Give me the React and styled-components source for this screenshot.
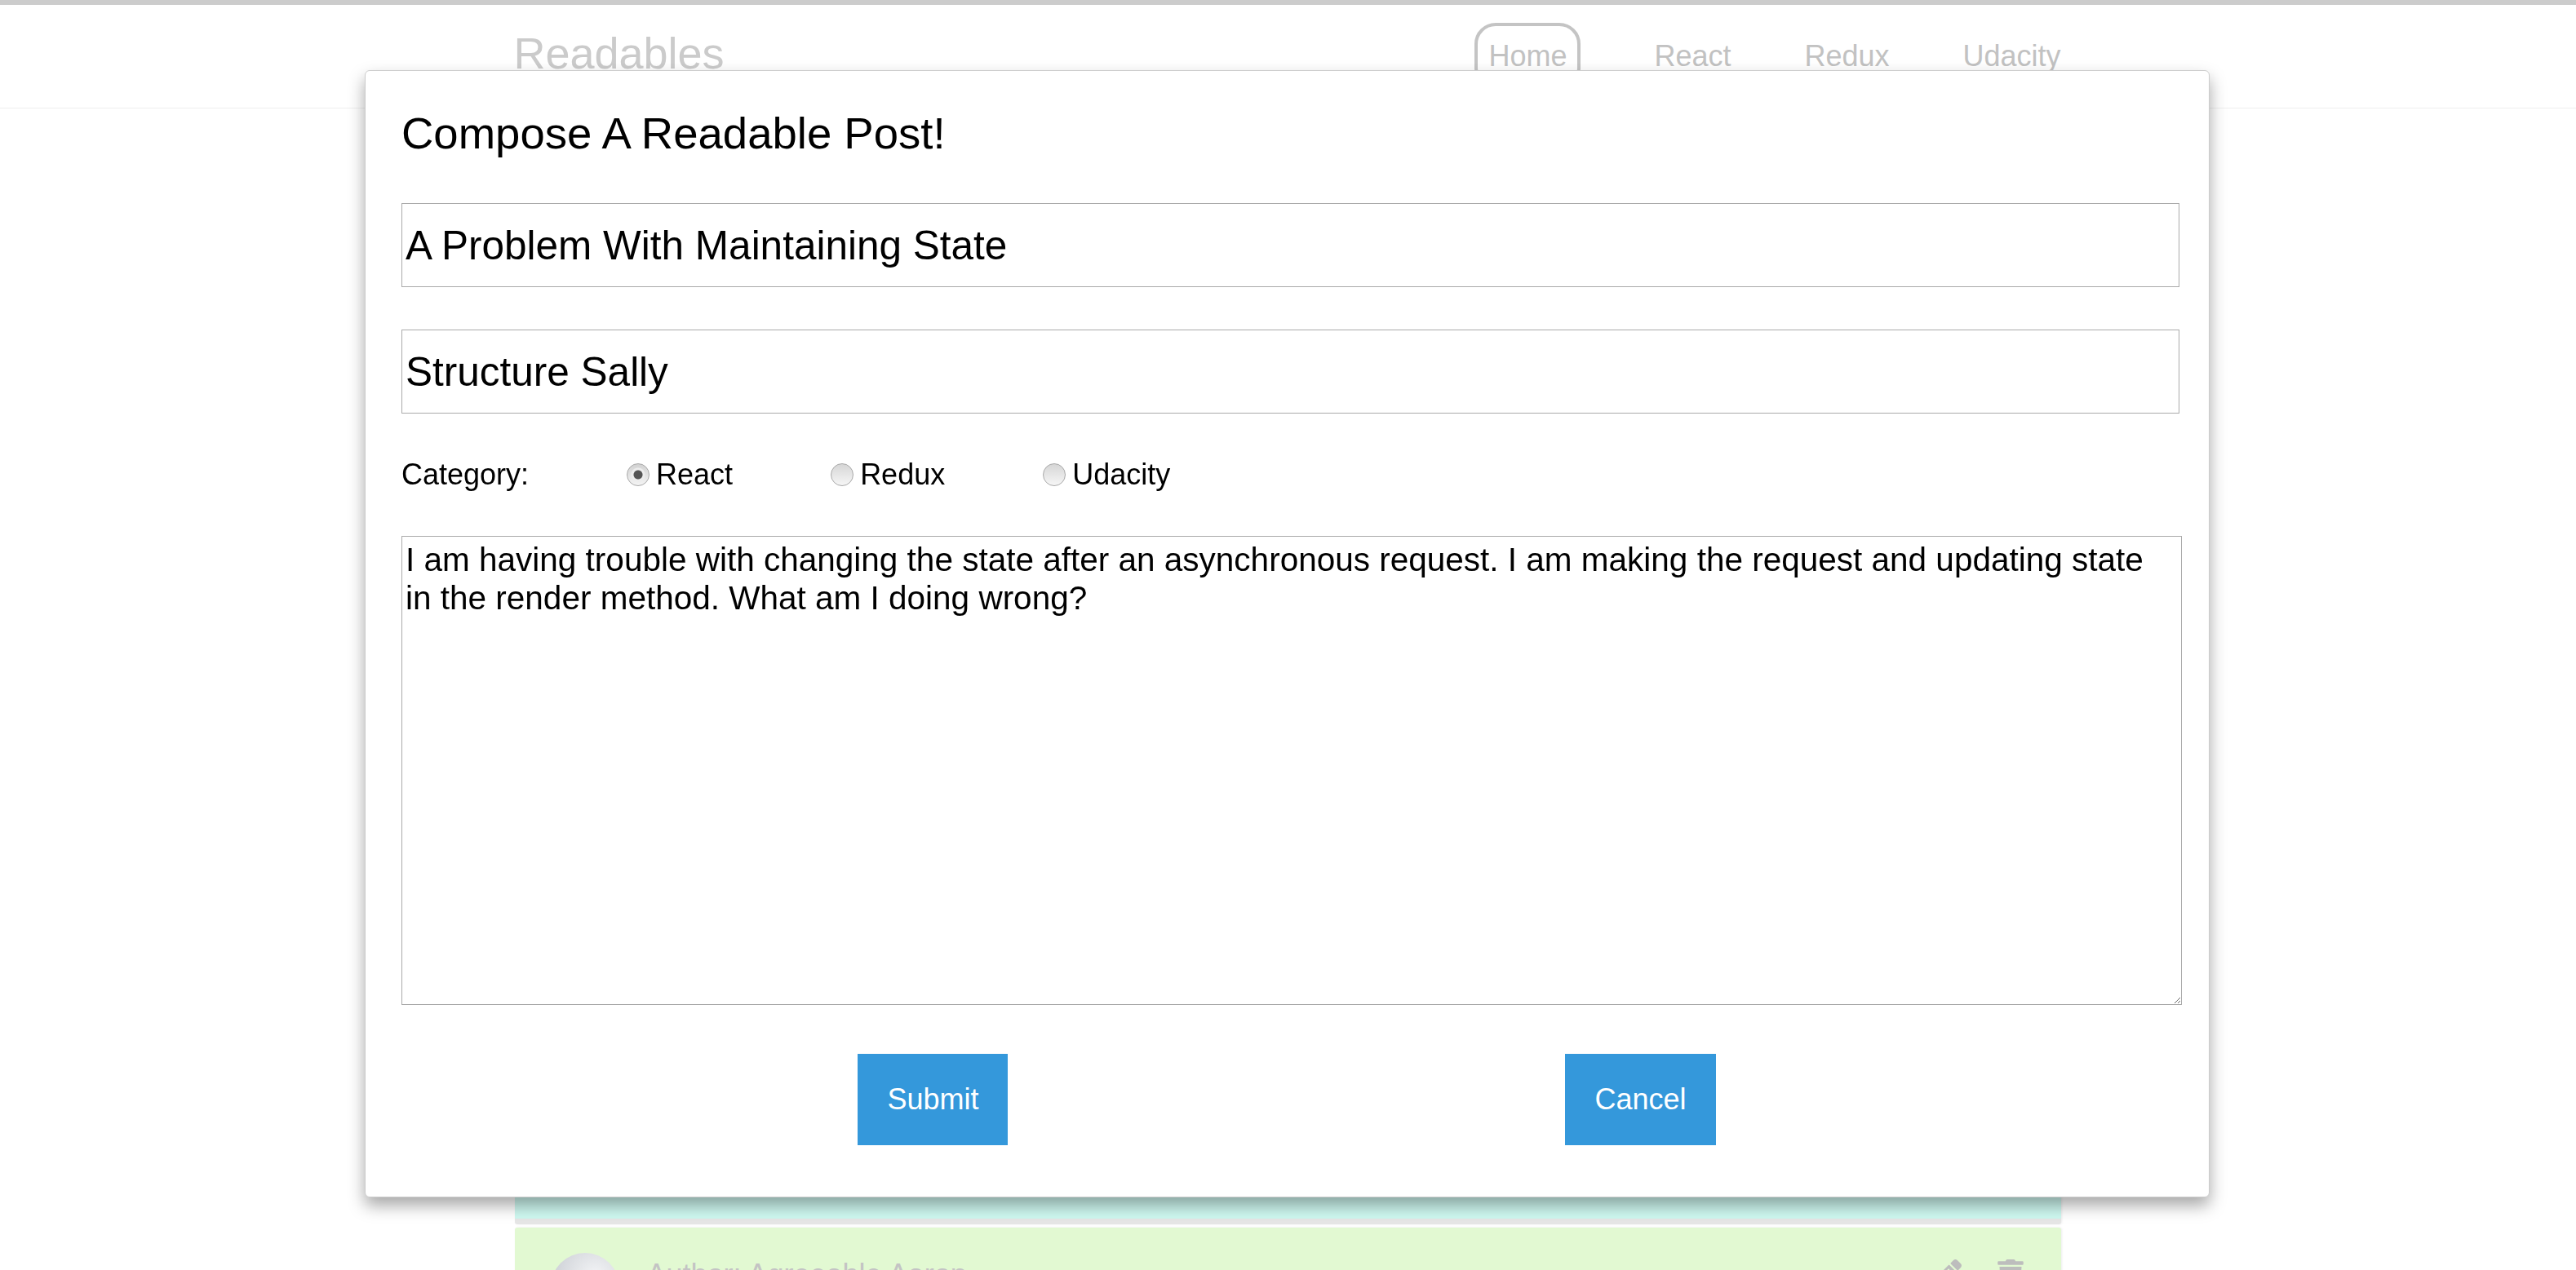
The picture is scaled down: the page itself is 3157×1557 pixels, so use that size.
import React, { useState } from "react";
import styled, { createGlobalStyle, css } from "styled-components";
import { FaPencilAlt, FaTrash } from "react-icons/fa";

const GlobalStyle = createGlobalStyle`
  html, body {
    margin: 0;
    padding: 0;
    overflow: hidden;
    background: #ffffff;
    font-family: "Liberation Sans", Arial, sans-serif;
  }
  * {
    box-sizing: border-box;
  }
`;

const TopStripe = styled.div`
  height: 6px;
  background: #cccccc;
`;

const HeaderBar = styled.header`
  height: 127px;
  border-bottom: 1px solid #efefef;
  background: #ffffff;
`;

const Container = styled.div`
  width: 60%;
  margin: 0 auto;
`;

const HeaderInner = styled(Container)`
  height: 100%;
  display: flex;
  justify-content: space-between;
  align-items: center;
`;

const Brand = styled.div`
  font-size: 54px;
  color: #cbcbcb;
  padding-bottom: 8px;
  margin-left: -2px;
`;

const Nav = styled.nav`
  display: flex;
  align-items: center;
  gap: 90px;
`;

const NavLink = styled.a`
  font-size: 36px;
  color: #c2c2c2;
  text-decoration: none;

  ${(p) =>
    p.$active &&
    css`
      border: 4px solid #c4c4c4;
      border-radius: 26px;
      padding: 16px 13px;
    `}
`;

const PostList = styled(Container)`
  padding-top: 40px;
  display: flex;
  flex-direction: column;
  gap: 4px;
`;

const PostCard = styled.div`
  height: 440px;
  background: ${(p) => p.$tint};
  border-bottom: 7px solid #e6e6e6;
  border-radius: 3px;
  box-shadow: 1px 0 3px rgba(0, 0, 0, 0.08);
  padding: 31px 44px;
`;

const CardRow = styled.div`
  display: flex;
  align-items: flex-start;
  gap: 33px;
`;

const Avatar = styled.div`
  width: 84px;
  height: 84px;
  border-radius: 50%;
  background: radial-gradient(circle at 65% 35%, #f4f5f7 0%, #d3d6db 60%, #bfc3c9 100%);
`;

const Author = styled.div`
  flex: 1;
  padding-top: 6px;
  font-size: 36px;
  color: #c4c4c4;
`;

const Actions = styled.div`
  display: flex;
  gap: 42px;
  padding-top: 8px;
  color: #bdbdbd;
  font-size: 36px;
`;

const Overlay = styled.div`
  position: fixed;
  inset: 0;
  background: transparent;
`;

const Modal = styled.div`
  position: absolute;
  top: 86px;
  left: 447px;
  width: 2261px;
  background: #ffffff;
  border: 1px solid #cccccc;
  border-radius: 6px;
  box-shadow: 0 10px 20px rgba(0, 0, 0, 0.35);
  padding: 45px 36px 63px 44px;
  color: #000000;
`;

const Form = styled.form`
  display: flex;
  flex-direction: column;
  gap: 54px;
`;

const Title = styled.h2`
  margin: 0;
  font-size: 54.5px;
  font-weight: 400;
`;

const TextField = styled.input`
  width: 100%;
  font-family: inherit;
  font-size: 49.5px;
  color: #000000;
  padding: 22px 4px;
  border: 1px solid #aaaaaa;
  border-radius: 0;
  outline: none;
  margin-top: ${(p) => p.$pull || 0}px;
`;

const CategoryRow = styled.div`
  display: flex;
  align-items: center;
  gap: 120px;
  font-size: 36px;
`;

const RadioOption = styled.label`
  display: flex;
  align-items: center;
  gap: 8px;
  cursor: pointer;
`;

const Radio = styled.input.attrs({ type: "radio" })`
  appearance: none;
  margin: 0;
  width: 28px;
  height: 28px;
  border-radius: 50%;
  border: 1px solid #a8a8a8;
  background: linear-gradient(#d6d6d6, #f6f6f6);

  &:checked {
    background: radial-gradient(circle, #555555 0 5px, #ededed 6px 8px, transparent 9px),
      linear-gradient(#d2d2d2, #f4f4f4);
  }
`;

const BodyArea = styled.textarea`
  width: calc(100% + 3px);
  height: 575px;
  font-family: inherit;
  font-size: 40.5px;
  color: #000000;
  padding: 5px 40px 2px 4px;
  border: 1px solid #aaaaaa;
  border-radius: 0;
  outline: none;
`;

const ButtonRow = styled.div`
  display: flex;
  justify-content: center;
  gap: 683px;
  margin-top: 6px;
  margin-right: 9px;
`;

const Button = styled.button`
  font-family: inherit;
  font-size: 36px;
  color: #ffffff;
  background: #3498db;
  border: none;
  border-radius: 0;
  padding: 35px 36px;
  cursor: pointer;
`;

const posts = [
  { id: 1, author: "Careful Carl", tint: "#fbe5e5" },
  { id: 2, author: "Thoughtful Theo", tint: "#e3eefb" },
  { id: 3, author: "Structure Sally", tint: "#cff9f1" },
  { id: 4, author: "Agreeable Aaron", tint: "#e2f9d2" },
];

const App = () => {
  const [post, setPost] = useState({
    title: "A Problem With Maintaining State",
    author: "Structure Sally",
    category: "react",
    body: "I am having trouble with changing the state after an asynchronous request. I am making the request and updating state in the render method. What am I doing wrong?",
  });

  const handleChange = (e) => {
    const { name, value } = e.target;
    setPost((pre) => ({ ...pre, [name]: value }));
  };

  return (
    <>
      <GlobalStyle />
      <TopStripe />
      <HeaderBar>
        <HeaderInner>
          <Brand>Readables</Brand>
          <Nav>
            <NavLink href="#" $active>
              Home
            </NavLink>
            <NavLink href="#">React</NavLink>
            <NavLink href="#">Redux</NavLink>
            <NavLink href="#">Udacity</NavLink>
          </Nav>
        </HeaderInner>
      </HeaderBar>

      <PostList>
        {posts.map((p) => (
          <PostCard key={p.id} $tint={p.tint}>
            <CardRow>
              <Avatar />
              <Author>Author: {p.author}</Author>
              <Actions>
                <FaPencilAlt />
                <FaTrash />
              </Actions>
            </CardRow>
          </PostCard>
        ))}
      </PostList>

      <Overlay>
        <Modal>
          <Form onSubmit={(e) => e.preventDefault()}>
            <Title>Compose A Readable Post!</Title>
            <TextField name="title" value={post.title} onChange={handleChange} />
            <TextField name="author" value={post.author} onChange={handleChange} $pull={-2} />
            <CategoryRow>
              <span>Category:</span>
              {["React", "Redux", "Udacity"].map((c) => (
                <RadioOption key={c}>
                  <Radio
                    name="category"
                    value={c.toLowerCase()}
                    checked={post.category === c.toLowerCase()}
                    onChange={handleChange}
                  />
                  {c}
                </RadioOption>
              ))}
            </CategoryRow>
            <BodyArea name="body" value={post.body} onChange={handleChange} />
            <ButtonRow>
              <Button type="submit">Submit</Button>
              <Button type="button">Cancel</Button>
            </ButtonRow>
          </Form>
        </Modal>
      </Overlay>
    </>
  );
};

export default App;
